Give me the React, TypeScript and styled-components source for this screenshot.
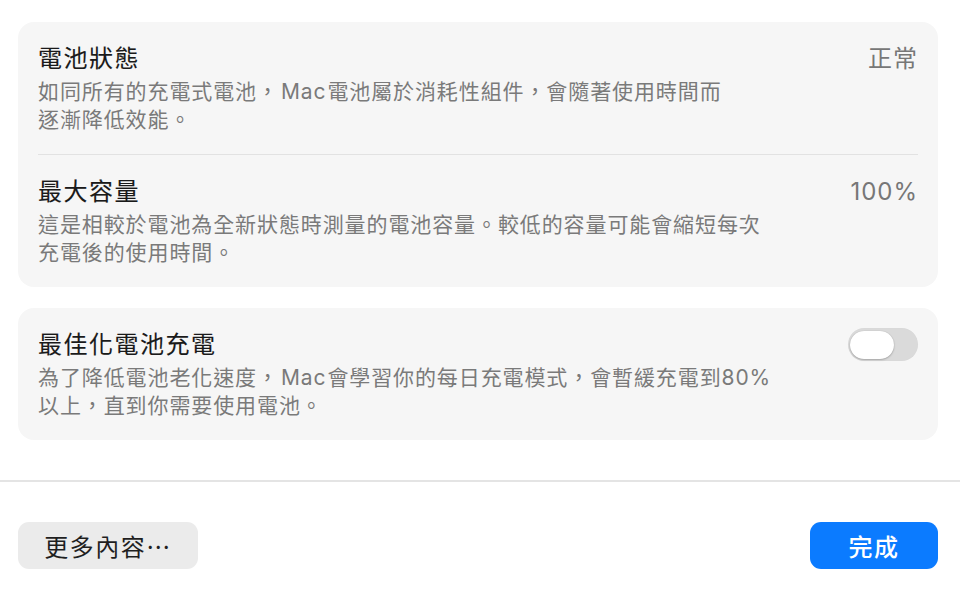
import * as React from 'react';
import styled, { createGlobalStyle } from 'styled-components';

const GlobalStyle = createGlobalStyle`
  html, body {
    margin: 0;
    padding: 0;
    background: #ffffff;
  }
  body {
    font-family: Inter, "Noto Sans CJK TC", "Noto Sans", sans-serif;
    -webkit-font-smoothing: antialiased;
  }
`;

const Page = styled.div`
  width: 960px;
  height: 590px;
  display: flex;
  flex-direction: column;
  box-sizing: border-box;
  overflow: hidden;
`;

const Content = styled.div`
  display: flex;
  flex-direction: column;
  gap: 21px;
  padding: 22px 22px 0 18px;
`;

const Card = styled.section`
  background: #f6f6f6;
  border-radius: 16px;
  padding: 0 20px;
`;

const Row = styled.div<{ $divider?: boolean }>`
  display: flex;
  justify-content: space-between;
  align-items: flex-start;
  padding: 21px 0 20px;
  border-bottom: ${(p) => (p.$divider ? '1px solid #e2e2e2' : 'none')};
`;

const TextCol = styled.div`
  display: flex;
  flex-direction: column;
  gap: 3px;
`;

const Title = styled.div`
  font-size: 24px;
  line-height: 32px;
  letter-spacing: 1.5px;
  color: #1a1a1a;
  -webkit-text-stroke: 0.1px #1a1a1a;
`;

const Desc = styled.div`
  font-size: 21px;
  line-height: 28px;
  letter-spacing: 0.9px;
  color: #7a7a7a;
`;

const Latin = styled.span`
  margin: 0 1px 0 2px;
`;

const Value = styled.div`
  font-size: 24px;
  line-height: 32px;
  letter-spacing: 1px;
  color: #777777;
`;

const Toggle = styled.div<{ $on?: boolean }>`
  width: 70px;
  height: 33px;
  margin-top: -1px;
  border-radius: 17px;
  background: ${(p) => (p.$on ? '#0a7aff' : '#dadada')};
  display: flex;
  align-items: center;
  padding: 0 2px;
  box-sizing: border-box;
  box-shadow: inset 0 0 1px rgba(0, 0, 0, 0.06);
`;

const Knob = styled.div`
  width: 44px;
  height: 28px;
  border-radius: 14px;
  background: #ffffff;
  box-shadow: 0 1px 2px rgba(0, 0, 0, 0.22), 0 0 1px rgba(0, 0, 0, 0.2);
`;

const Footer = styled.footer`
  margin-top: 40px;
  border-top: 2px solid #e4e4e4;
  display: flex;
  justify-content: space-between;
  padding: 40px 22px 0 18px;
`;

const Button = styled.button<{ $primary?: boolean }>`
  height: 47px;
  border: none;
  border-radius: 11px;
  font-family: inherit;
  font-size: 24px;
  letter-spacing: 1.5px;
  padding: 0 ${(p) => (p.$primary ? '34px' : '24px')};
  min-width: ${(p) => (p.$primary ? '128px' : '180px')};
  background: ${(p) => (p.$primary ? '#0b7bff' : '#ebebeb')};
  color: ${(p) => (p.$primary ? '#ffffff' : '#1f1f1f')};
  font-weight: ${(p) => (p.$primary ? 500 : 400)};
  display: flex;
  align-items: center;
  justify-content: center;
`;

export default function App() {
  return (
    <Page>
      <GlobalStyle />
      <Content>
        <Card>
          <Row $divider>
            <TextCol>
              <Title>電池狀態</Title>
              <Desc>
                如同所有的充電式電池，<Latin>Mac</Latin>電池屬於消耗性組件，會隨著使用時間而
                <br />
                逐漸降低效能。
              </Desc>
            </TextCol>
            <Value>正常</Value>
          </Row>
          <Row>
            <TextCol>
              <Title>最大容量</Title>
              <Desc>
                這是相較於電池為全新狀態時測量的電池容量。較低的容量可能會縮短每次
                <br />
                充電後的使用時間。
              </Desc>
            </TextCol>
            <Value>100%</Value>
          </Row>
        </Card>
        <Card>
          <Row>
            <TextCol>
              <Title>最佳化電池充電</Title>
              <Desc>
                為了降低電池老化速度，<Latin>Mac</Latin>會學習你的每日充電模式，會暫緩充電到80%
                <br />
                以上，直到你需要使用電池。
              </Desc>
            </TextCol>
            <Toggle>
              <Knob />
            </Toggle>
          </Row>
        </Card>
      </Content>
      <Footer>
        <Button>更多內容⋯</Button>
        <Button $primary>完成</Button>
      </Footer>
    </Page>
  );
}
